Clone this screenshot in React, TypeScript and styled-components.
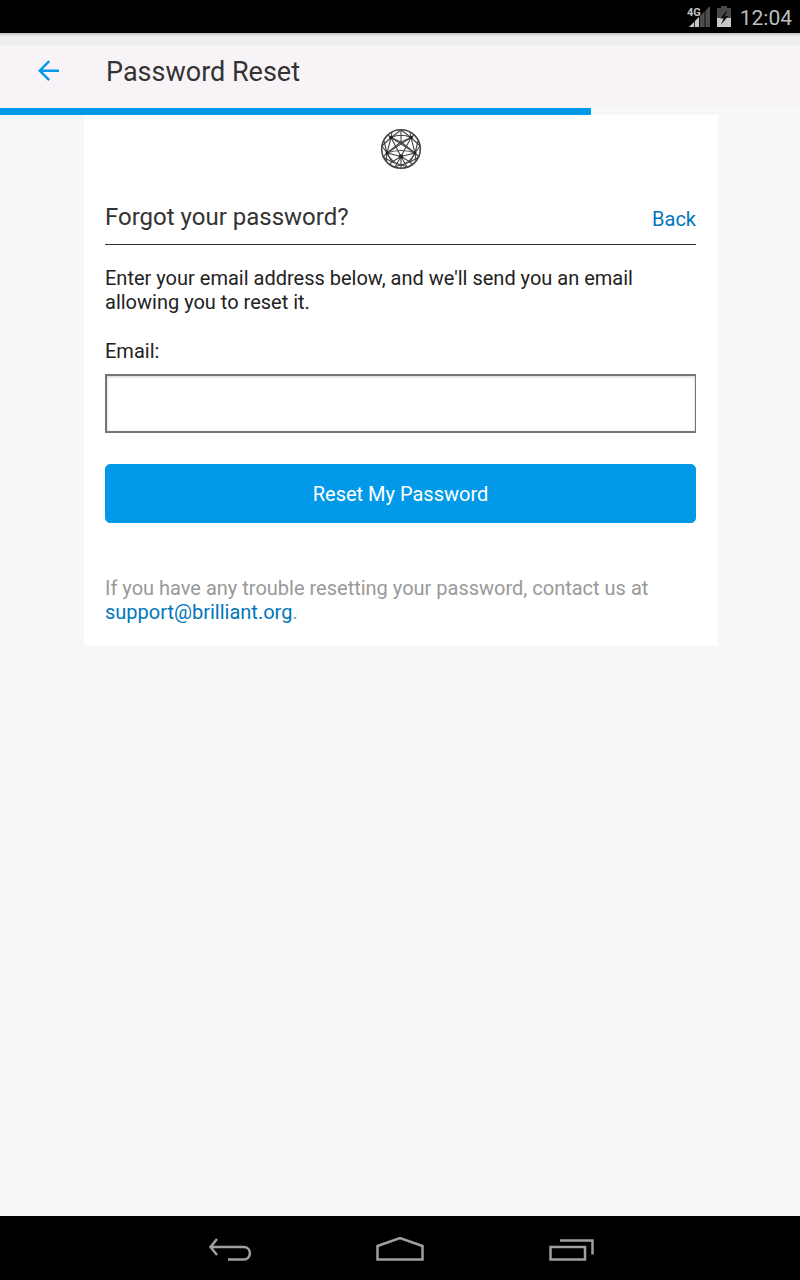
import React from "react";
import styled, { createGlobalStyle } from "styled-components";

const GlobalStyle = createGlobalStyle`
  *, *::before, *::after { box-sizing: border-box; }
  body {
    margin: 0;
    background: #f7f7f7;
    color: #222;
    font-family: Roboto, "Noto Sans", sans-serif;
    font-size: 20px;
    line-height: 24px;
  }
`;

const Screen = styled.div`
  display: flex;
  flex-direction: column;
  min-height: 100vh;
`;

const StatusBar = styled.div`
  display: flex;
  align-items: center;
  justify-content: flex-end;
  gap: 6px;
  height: 33px;
  padding-right: 8px;
  background: #000;
  color: #bebebe;
`;

const Clock = styled.time`
  padding: 2px 0 0 3px;
  font-size: 21px;
`;

const AppBar = styled.header`
  display: flex;
  align-items: center;
  gap: 42px;
  height: 75px;
  padding: 12px 34px 10px;
  background: linear-gradient(#bdbdbd 0, #dedcdd 2px, #eeeced 4px, #eeeeee 12px, #f8f3f7 12px);
`;

const IconButton = styled.button`
  display: flex;
  padding: 0;
  border: 0;
  background: none;
  color: #029ae8;
  cursor: pointer;
`;

const Title = styled.h1`
  margin: 0;
  color: #333;
  font-size: 27px;
  font-weight: 400;
  line-height: 32px;
`;

const ProgressTrack = styled.div`
  height: 7px;
`;

const ProgressFill = styled.div`
  height: 100%;
  background: #029ae8;
`;

const Main = styled.main`
  flex: 1;
  padding: 0 82px 0 84px;
`;

const Card = styled.section`
  display: flex;
  flex-direction: column;
  padding: 13px 22px 22px 21px;
  background: #fff;
`;

const LogoRow = styled.div`
  display: flex;
  justify-content: center;
  margin-bottom: 31px;
`;

const CardHeader = styled.div`
  display: flex;
  align-items: flex-end;
  justify-content: space-between;
  height: 44px;
  padding-bottom: 13px;
  border-bottom: 1px solid #333;
`;

const Heading = styled.h2`
  margin: 0;
  color: #333;
  font-size: 24px;
  font-weight: 400;
  line-height: 28px;
`;

const Link = styled.a`
  color: #0077bb;
  text-decoration: none;
`;

const Form = styled.form`
  display: flex;
  flex-direction: column;
`;

const Intro = styled.p`
  margin: 21px 0 25px;
`;

const EmailInput = styled.input`
  height: 59px;
  margin: 11px 0 31px;
  padding: 0 16px;
  border: 2px solid #757575;
  border-right-width: 1px;
  border-radius: 0;
  background: #fff;
  box-shadow: inset 0 1px 3px #d0d0d0;
  font: inherit;
`;

const SubmitButton = styled.button`
  height: 59px;
  padding: 0;
  border: 1px solid #029ae8;
  border-radius: 5px;
  background: #029ae8;
  color: #fff;
  font: inherit;
  cursor: pointer;
`;

const Help = styled.p`
  margin: 53px 0 0;
  color: #999;
`;

const NavBar = styled.nav`
  display: flex;
  align-items: center;
  justify-content: center;
  gap: 122px;
  height: 64px;
  padding-top: 2px;
  background: #000;

  button { color: #a0a0a0; }
`;

function SignalIcon() {
  return (
    <svg width="24" height="24" viewBox="0 0 24 24" aria-hidden="true">
      <path d="M2 22 23 1v21z" fill="#4a4e4a" />
      <path d="M2 22 12 12v10z" fill="#c8c8c8" />
      <path d="M7.500 11v11M12.500 7v15M18 3v19" stroke="#000" strokeWidth=".8" />
      <text x="0" y="11" fill="#c4c4c4" stroke="#000" strokeWidth="1" paintOrder="stroke" fontFamily="Roboto" fontSize="11" fontWeight="700">4G</text>
    </svg>
  );
}

function BatteryIcon() {
  return (
    <svg width="14" height="22" viewBox="0 0 14 22" aria-hidden="true">
      <path d="M4 0h6v2h4v19H0V2h4z" fill="#484848" />
      <path d="M0 12h14v9H0z" fill="#c8c8c8" />
      <path d="M9 5 3.500 12.500h3L4 18.500 11.500 10H8L10 5z" fill="#111" />
    </svg>
  );
}

function ArrowLeft() {
  return (
    <svg width="30" height="30" viewBox="0 0 30 30" fill="none" stroke="currentColor" strokeWidth="2.400">
      <path d="M25 13.700H6M15.200 4.200 5.700 13.700l9.500 9.500" />
    </svg>
  );
}

function GlobeLogo() {
  return (
    <svg width="42" height="42" viewBox="0 0 42 42" fill="none" stroke="#444" role="img" aria-label="Brilliant">
      <circle cx="21" cy="21" r="19.300" strokeWidth="1.600" />
      <g strokeWidth="1.100">
        <path d="M21 14 11 9.500 7 25 21 28.500 35 25 31 9.500zM11 9.500 21 28.500 31 9.500" />
        <path d="M21 14 7 25M21 14 35 25M11 9.500Q21 5 31 9.500M21 14V2M21 28.500V40" />
        <path d="M11 9.500 35 25M31 9.500 7 25M7 25Q21 20 35 25" />
        <path d="M11 9.500 8 7M31 9.500 34 7M11 9.500 2 18M31 9.500 40 18M11 9.500 21 2 31 9.500M11 9.500 12 4M31 9.500 30 4" />
        <path d="M7 25 2 18M35 25 40 18M7 25 3 29M35 25 39 29M7 25 12 34 21 28.500 30 34 35 25M7 25 4 13M35 25 38 13" />
        <path d="M12 34 21 37 30 34M12 34 9 37M30 34 33 37M12 34 3 29M30 34 39 29M21 37 14 39M21 37 28 39" />
        <path d="M7 25 6 34M35 25 36 34M7 25Q12 35 21 37Q30 35 35 25M21 28.500 15 39M21 28.500 27 39" />
      </g>
      <g fill="#222" stroke="none">
        <circle cx="21" cy="28.500" r="2.200" />
        <circle cx="11" cy="9.500" r="1.800" />
        <circle cx="31" cy="9.500" r="1.800" />
        <circle cx="7" cy="25" r="1.500" />
        <circle cx="35" cy="25" r="1.500" />
      </g>
    </svg>
  );
}

function NavIcon({ d }: { d: string }) {
  return (
    <svg width="50" height="28" viewBox="0 0 50 28" fill="none" stroke="currentColor" strokeWidth="2.500">
      <path d={d} />
    </svg>
  );
}

const NAV_ITEMS = [
  { label: "Back", d: "M14 4 7.500 12l6.500 8M8 12H40.500C49 12 49 24.500 40.500 24.500H25" },
  { label: "Home", d: "M2.500 24.500V11L25 3 47.500 11V24.500z" },
  { label: "Recent apps", d: "M3.500 12H38V24.500H3.500zM13 5.500H45.500V19.500" },
];

export default function App() {
  const progress = 73.9;

  return (
    <Screen>
      <GlobalStyle />
      <StatusBar>
        <SignalIcon />
        <BatteryIcon />
        <Clock>12:04</Clock>
      </StatusBar>
      <AppBar>
        <IconButton type="button" aria-label="Go back">
          <ArrowLeft />
        </IconButton>
        <Title>Password Reset</Title>
      </AppBar>
      <ProgressTrack role="progressbar" aria-label="Page loading" aria-valuenow={progress}>
        <ProgressFill style={{ width: `${progress}%` }} />
      </ProgressTrack>
      <Main>
        <Card>
          <LogoRow>
            <GlobeLogo />
          </LogoRow>
          <CardHeader>
            <Heading>Forgot your password?</Heading>
            <Link href="#login">Back</Link>
          </CardHeader>
          <Form onSubmit={(event) => event.preventDefault()}>
            <Intro>
              Enter your email address below, and we'll send you an email allowing you to reset it.
            </Intro>
            <label htmlFor="email">Email:</label>
            <EmailInput id="email" type="email" />
            <SubmitButton type="submit">Reset My Password</SubmitButton>
          </Form>
          <Help>
            If you have any trouble resetting your password, contact us at{" "}
            <Link href="mailto:support@brilliant.org">support@brilliant.org</Link>.
          </Help>
        </Card>
      </Main>
      <NavBar aria-label="System">
        {NAV_ITEMS.map((item) => (
          <IconButton key={item.label} type="button" aria-label={item.label}>
            <NavIcon d={item.d} />
          </IconButton>
        ))}
      </NavBar>
    </Screen>
  );
}
